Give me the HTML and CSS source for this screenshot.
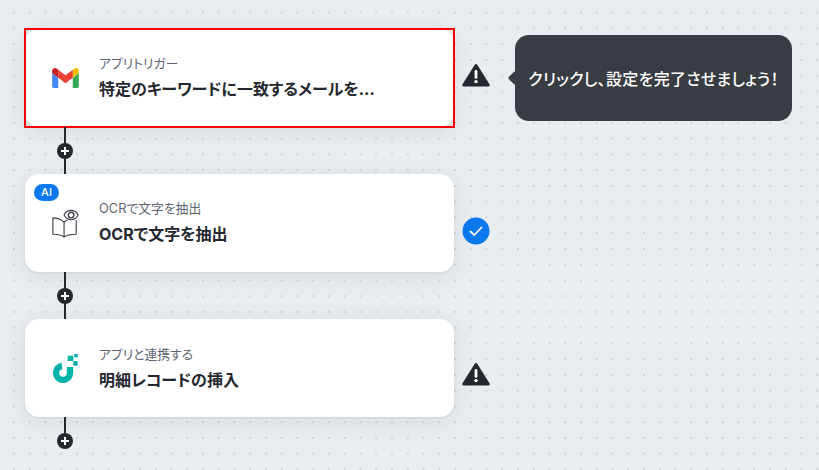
FILE: index.html
```html
<!DOCTYPE html>
<html lang="ja">
<head>
<meta charset="utf-8">
<title>フロー</title>
<link rel="stylesheet" href="styles.css">
</head>
<body>
<main class="flow">
  <section class="row">
    <div class="card card-selected">
      <span class="app-icon">
        <svg width="27" height="20" viewBox="52 42 88 66"><path fill="#4285f4" d="M58 108h14V74L52 59v43c0 3.32 2.69 6 6 6"/><path fill="#34a853" d="M120 108h14c3.32 0 6-2.69 6-6V59l-20 15"/><path fill="#fbbc04" d="M120 48v26l20-15v-8c0-7.42-8.47-11.65-14.4-7.2"/><path fill="#ea4335" d="M72 74V48l24 18 24-18v26L96 92"/><path fill="#c5221f" d="M52 51v8l20 15V48l-5.6-4.2c-5.94-4.45-14.4-.22-14.4 7.2"/></svg>
      </span>
      <div class="card-text">
        <div class="card-label">アプリトリガー</div>
        <div class="card-title">特定のキーワードに一致するメールを...</div>
      </div>
    </div>
    <svg class="status status-warn-top" width="28" height="24" viewBox="0 0 28 24"><path class="warn" d="M14 2.5 L26.2 22 H1.8 Z"/><rect class="warn-mark" x="12.6" y="7" width="2.8" height="8.800" rx="1.3"/><circle class="warn-mark" cx="14" cy="18.6" r="1.7"/></svg>
    <div class="tooltip">クリックし、設定を完了させましょう！</div>
  </section>
  <div class="connector"><span class="plus"></span></div>
  <section class="row">
    <div class="card">
      <span class="badge">AI</span>
      <span class="app-icon">
        <svg width="30" height="32" viewBox="0 0 30 32" fill="none" stroke="#3a3f47" stroke-width="1.2" stroke-linejoin="round" stroke-linecap="round"><path d="M14 31 V15 C11 12.5 6 10.500 2 10.500 V28 C6 28 11 28.500 14 31 C17 28.500 22 28 27 28 V13"/><path d="M14 15 C15 14 16 13.500 17 13"/><path d="M14 7.500 C15.500 4.300 18 2.500 21.500 2.500 C25 2.500 27.500 4.300 29 7.500 C27.500 10.700 25 12.500 21.500 12.500 C18 12.500 15.500 10.700 14 7.500 Z" fill="#fff"/><circle cx="21.500" cy="7.500" r="3" stroke-width="1.500"/></svg>
      </span>
      <div class="card-text">
        <div class="card-label">OCRで文字を抽出</div>
        <div class="card-title">OCRで文字を抽出</div>
      </div>
    </div>
    <svg class="status status-check" width="28" height="28" viewBox="0 0 28 28"><circle cx="14" cy="14" r="13.500" fill="#0b78ee"/><path d="M8.500 14.500 L12.300 18 L19.500 10.500" fill="none" stroke="#fff" stroke-width="1.800" stroke-linecap="round" stroke-linejoin="round"/></svg>
  </section>
  <div class="connector"><span class="plus"></span></div>
  <section class="row">
    <div class="card">
      <span class="app-icon">
        <svg width="26" height="30" viewBox="0 0 26 30"><path d="M10 13 A7 7 0 1 0 18 20 V14" fill="none" stroke="#00b2a9" stroke-width="6.400"/><rect x="15.700" y="2.700" width="5.600" height="5.300" fill="#00b2a9"/><rect x="21.300" y="8" width="4.400" height="4.700" fill="#00b2a9"/><rect x="22.300" y="1" width="3.400" height="3.300" fill="#00b2a9"/></svg>
      </span>
      <div class="card-text card-text-low">
        <div class="card-label">アプリと連携する</div>
        <div class="card-title">明細レコードの挿入</div>
      </div>
    </div>
    <svg class="status status-warn-bottom" width="28" height="24" viewBox="0 0 28 24"><path class="warn" d="M14 2.5 L26.2 22 H1.8 Z"/><rect class="warn-mark" x="12.6" y="7" width="2.8" height="8.800" rx="1.3"/><circle class="warn-mark" cx="14" cy="18.6" r="1.7"/></svg>
  </section>
  <div class="connector connector-end"><span class="plus"></span></div>
</main>
</body>
</html>
```
FILE: styles.css
```css
* { box-sizing: border-box; }
html, body { margin: 0; height: 100%; }
body {
  overflow: hidden;
  background-color: #e9ecf0;
  background-image: radial-gradient(circle at center, #d0d4d9 0, #d0d4d9 1px, transparent 1.4px);
  background-size: 15.76px 15.76px;
  background-position: 6.1px 4.8px;
  font-family: Inter, "Noto Sans CJK JP", sans-serif;
  font-feature-settings: "palt";
  color: #24282e;
}
.flow { display: flex; flex-direction: column; padding: 29px 0 0 25px; }
.row { display: flex; align-items: center; }
.card {
  position: relative;
  display: flex;
  align-items: center;
  width: 428.500px;
  height: 98px;
  padding-left: 26px;
  background: #fff;
  border-radius: 14px;
  box-shadow: 0 4px 22px rgba(40, 50, 70, 0.09), 0 1px 2px rgba(40, 50, 70, 0.08);
}
.card-selected::after {
  content: "";
  position: absolute;
  inset: -1px -1.500px -1px -1px;
  border: 2px solid #f00;
}
.app-icon { display: flex; justify-content: center; width: 28px; margin-right: 20px; }
.card-text { display: flex; flex-direction: column; gap: 6px; padding-bottom: 2px; }
.card-text-low { padding-bottom: 0; }
.card-label { font-size: 12.800px; line-height: 17px; color: #5d6470; }
.card-title { font-size: 16px; line-height: 22px; font-weight: 700; }
.badge {
  position: absolute;
  left: 9px;
  top: 10px;
  width: 25px;
  height: 17px;
  border-radius: 9px;
  background: #0b78ee;
  color: #fff;
  font-size: 11px;
  font-weight: 500;
  line-height: 17px;
  text-align: center;
}
.status { margin-left: 8.500px; flex: none; }
.status-warn-top { margin-top: -6px; }
.status-check { margin-top: 16px; }
.status-warn-bottom { margin-top: 11px; }
.warn { fill: #23272e; stroke: #23272e; stroke-width: 3; stroke-linejoin: round; }
.warn-mark { fill: #fff; }
.tooltip {
  position: relative;
  display: flex;
  align-items: center;
  justify-content: center;
  width: 277px;
  height: 86px;
  margin-left: 25px;
  border-radius: 14px;
  background: #383d44;
  color: #fff;
  font-size: 16px;
  font-weight: 500;
  letter-spacing: 0.3px;
}
.tooltip::before {
  content: "";
  position: absolute;
  left: -6px;
  top: 37px;
  width: 12px;
  height: 12px;
  border-radius: 2px;
  background: #383d44;
  transform: rotate(45deg) scale(0.85);
}
.connector {
  position: relative;
  width: 2px;
  height: 47.200px;
  margin-left: 39px;
  background: #23272e;
}
.connector-end { height: 16px; overflow: visible; }
.plus {
  position: absolute;
  left: -7px;
  top: 15.500px;
  width: 16px;
  height: 16px;
  border-radius: 50%;
  background:
    linear-gradient(#fff, #fff) center / 8px 2px no-repeat,
    linear-gradient(#fff, #fff) center / 2px 8px no-repeat,
    #23272e;
}
```
